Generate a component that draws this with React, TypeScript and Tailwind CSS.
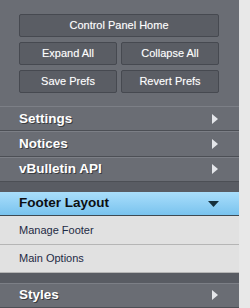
import React from "react";

const RightArrow = () => (
  <svg width="6" height="10" viewBox="0 0 6 10" className="block">
    <path d="M0 0 L6 5 L0 10 Z" fill="#e4e6ea" />
  </svg>
);

const DownArrow = () => (
  <svg width="11" height="6" viewBox="0 0 11 6" className="block">
    <path d="M0 0 L11 0 L5.5 6 Z" fill="#16303c" />
  </svg>
);

const Btn = ({ children }: { children: React.ReactNode }) => (
  <div className="h-[23px] flex items-center justify-center rounded-[2px] border border-[#464950] bg-[#5a5d64] text-[11px] text-white [text-shadow:0_0_1px_rgba(255,255,255,0.35)]">
    {children}
  </div>
);

const NavRow = ({ label }: { label: string }) => (
  <div className="h-[26px] flex items-center justify-between pl-[19px] pr-[21px] border-t border-t-[#7c7f86] border-b border-b-[#4c4f55] bg-[#6a6d74]">
    <span className="text-[13.5px] font-bold text-white [text-shadow:1px_1px_0_#3a3c40]">{label}</span>
    <RightArrow />
  </div>
);

const SubRow = ({ label }: { label: string }) => (
  <div className="h-[29px] flex items-center pl-[19px] bg-[#e1e1e1] border-b border-b-[#b5b5b5] text-[11px] text-[#1e2a44]">
    {label}
  </div>
);

export default function App() {
  return (
    <div
      className="w-[250px] h-[308px] flex bg-[#e8e8e8] overflow-hidden"
      style={{ fontFamily: '"Liberation Sans", Arial, sans-serif' }}
    >
      <div className="w-[239px] flex flex-col bg-[#595c63]">
        <div className="bg-[#6a6d74] pt-[14px] pb-[13px] pl-[19px] pr-[20px] flex flex-col gap-[5px]">
          <Btn>Control Panel Home</Btn>
          <div className="grid grid-cols-2 gap-[4px]">
            <Btn>Expand All</Btn>
            <Btn>Collapse All</Btn>
          </div>
          <div className="grid grid-cols-2 gap-[4px]">
            <Btn>Save Prefs</Btn>
            <Btn>Revert Prefs</Btn>
          </div>
        </div>
        <NavRow label="Settings" />
        <NavRow label="Notices" />
        <NavRow label="vBulletin API" />
        <div className="h-[10px]" />
        <div className="h-[25px] flex items-center justify-between pl-[19px] pr-[20px] bg-gradient-to-b from-[#a9defb] to-[#79c3ee] border-b border-b-[#3e4a52]">
          <span className="text-[13.5px] font-bold text-[#0d0f12]">Footer Layout</span>
          <DownArrow />
        </div>
        <SubRow label="Manage Footer" />
        <SubRow label="Main Options" />
        <div className="h-[10px]" />
        <NavRow label="Styles" />
      </div>
    </div>
  );
}
